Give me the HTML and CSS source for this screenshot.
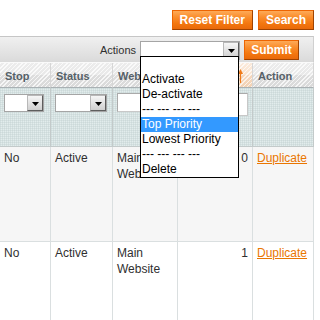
FILE: index.html
```html
<!DOCTYPE html>
<html>
<head>
<meta charset="utf-8">
<link rel="stylesheet" href="styles.css">
</head>
<body>
<div class="page">
  <div class="topbar">
    <button class="btn">Reset Filter</button>
    <button class="btn">Search</button>
  </div>
  <div class="grid">
    <div class="massaction">
      <span class="ma-label">Actions</span>
      <div class="select ma-select">
        <span class="select-arrow"><svg width="7" height="4" viewBox="0 0 7 4"><path d="M0 0h7L3.5 4z" fill="#000"/></svg></span>
        <ul class="dropdown">
          <li>&nbsp;</li>
          <li>Activate</li>
          <li>De-activate</li>
          <li>--- --- --- ---</li>
          <li class="hl">Top Priority</li>
          <li>Lowest Priority</li>
          <li>--- --- --- ---</li>
          <li>Delete</li>
        </ul>
      </div>
      <button class="btn btn-submit">Submit</button>
    </div>
    <div class="table">
      <div class="th">Stop</div>
      <div class="th">Status</div>
      <div class="th">Website</div>
      <div class="th th-sorted"><span class="th-text">Priority</span><svg class="sort-arrow" width="5" height="14" viewBox="0 0 5 14"><path d="M2.5 3.5V14" stroke="#f07a18" stroke-width="1.2"/><path d="M0 5L2.5 0 5 5z" fill="#f07a18"/></svg></div>
      <div class="th">Action</div>

      <div class="tf"><div class="select f-sel1"><span class="select-arrow"><svg width="7" height="4" viewBox="0 0 7 4"><path d="M0 0h7L3.5 4z" fill="#000"/></svg></span></div></div>
      <div class="tf"><div class="select f-sel2"><span class="select-arrow"><svg width="7" height="4" viewBox="0 0 7 4"><path d="M0 0h7L3.5 4z" fill="#000"/></svg></span></div></div>
      <div class="tf"><div class="input f-text"></div></div>
      <div class="tf tf-range">
        <div class="input range-input"></div>
      </div>
      <div class="tf"></div>

      <div class="td row-even">No</div>
      <div class="td row-even">Active</div>
      <div class="td row-even">Main Website</div>
      <div class="td row-even num">0</div>
      <div class="td row-even"><a class="link" href="#">Duplicate</a></div>

      <div class="td row-odd">No</div>
      <div class="td row-odd">Active</div>
      <div class="td row-odd">Main Website</div>
      <div class="td row-odd num">1</div>
      <div class="td row-odd"><a class="link" href="#">Duplicate</a></div>
    </div>
  </div>
</div>
</body>
</html>
```
FILE: styles.css
```css
html, body {
  margin: 0;
  padding: 0;
  background: #fff;
}

body {
  font-family: "Liberation Sans", Arial, sans-serif;
  font-size: 12px;
  color: #2f2f2f;
}

.page {
  width: 314px;
}

.topbar {
  height: 36px;
  box-sizing: border-box;
  padding-top: 10px;
  display: flex;
  justify-content: flex-end;
  align-items: flex-start;
  gap: 5px;
}

.btn {
  font-family: "Liberation Sans", Arial, sans-serif;
  font-weight: bold;
  font-size: 12px;
  color: #fff;
  height: 20px;
  line-height: 18px;
  padding: 0 7px;
  margin: 0;
  border: 1px solid;
  border-color: #ed6502 #a04300 #a04300 #ed6502;
  background: linear-gradient(#fdaa58 0%, #fa8d2c 35%, #f3770f 70%, #e9690a 100%);
  border-radius: 0;
  cursor: pointer;
}

.btn-submit {
  width: 55px;
  padding: 0;
}

.grid {
  width: 314px;
}

.massaction {
  height: 27px;
  box-sizing: border-box;
  border-top: 1px solid #c6c6c6;
  border-right: 1px solid #d0d0d0;
  border-bottom: 1px solid #fafafa;
  background: linear-gradient(#f0f0f0, #dadada);
  display: flex;
  justify-content: flex-end;
  align-items: center;
  gap: 4px;
  padding-right: 14px;
}

.ma-label {
  font-size: 11px;
  color: #2f2f2f;
}

.select {
  position: relative;
  box-sizing: border-box;
  height: 18px;
  background: #fff;
  border: 1px solid #a5a5a5;
  display: flex;
  justify-content: flex-end;
}

.ma-select {
  width: 100px;
  height: 19px;
  margin-top: 1px;
}

.select-arrow {
  width: 16px;
  height: 100%;
  box-sizing: border-box;
  border: 1px solid;
  border-color: #b8b8b8 #5e5e5e #5e5e5e #b8b8b8;
  background: linear-gradient(#f6f6f6, #cfcfcf);
  display: flex;
  align-items: center;
  justify-content: center;
}

.select-arrow svg {
  display: block;
  margin-top: 1px;
}

.dropdown {
  position: absolute;
  z-index: 10;
  top: 14px;
  left: -1px;
  width: 99px;
  box-sizing: border-box;
  margin: 0;
  padding: 0;
  list-style: none;
  background: #fff;
  border: 1px solid #000;
  font-size: 12px;
  color: #000;
}

.dropdown li {
  height: 15px;
  line-height: 15px;
  padding-left: 1px;
  white-space: nowrap;
}

.dropdown li.hl {
  background: #3399ff;
  color: #fff;
}

.table {
  display: grid;
  grid-template-columns: 51px 62px 65px 75px 61px;
}

.th {
  height: 25px;
  box-sizing: border-box;
  padding: 2px 5px 0;
  display: flex;
  align-items: center;
  font-size: 11px;
  font-weight: bold;
  color: #566168;
  white-space: nowrap;
  overflow: hidden;
  border-right: 1px solid #d6d6d6;
  border-bottom: 1px solid #a9b1b4;
  background:
    repeating-linear-gradient(-45deg, rgba(255,255,255,0.75) 0 1px, transparent 1px 3px),
    linear-gradient(#ececec 0%, #e9e9e9 50%, #dddddd 52%, #dadada 100%);
}

.th-sorted {
  justify-content: flex-end;
  padding-right: 9px;
  background:
    repeating-linear-gradient(-45deg, rgba(255,255,255,0.7) 0 1px, transparent 1px 3px),
    linear-gradient(#fbeadb 0%, #f9e3cf 50%, #f4d6bc 52%, #f2d2b5 100%);
}

.th-text {
  margin-right: 3px;
  color: #566168;
}

.sort-arrow {
  display: block;
}

.tf {
  height: 59px;
  box-sizing: border-box;
  padding: 6px 4px 0;
  border-right: 1px solid #c3caca;
  border-bottom: 1px solid #c3caca;
  background-color: #e2ecec;
  background-image:
    linear-gradient(90deg, rgba(196,210,210,0.45) 1px, transparent 1px),
    linear-gradient(rgba(196,210,210,0.45) 1px, transparent 1px);
  background-size: 2px 2px;
}

.f-sel1 {
  width: 40px;
}

.f-sel2 {
  width: 52px;
}

.input {
  box-sizing: border-box;
  height: 19px;
  background: #fff;
  border: 1px solid;
  border-color: #aaa #c8c8c8 #c8c8c8 #aaa;
}

.f-text {
  margin-top: -1px;
}

.tf-range {
  padding-top: 5px;
}

.range-input {
  height: 23px;
}

.td {
  box-sizing: border-box;
  padding: 3px 4px;
  line-height: 16px;
  font-size: 12px;
  color: #2f2f2f;
  border-right: 1px solid #dadfe0;
  border-bottom: 1px solid #dadfe0;
}

.row-even {
  height: 95px;
  background: #f6f6f6;
}

.row-odd {
  height: 90px;
  background: #fff;
}

.num {
  text-align: right;
}

.link {
  color: #ea7601;
  text-decoration: underline;
}
```
